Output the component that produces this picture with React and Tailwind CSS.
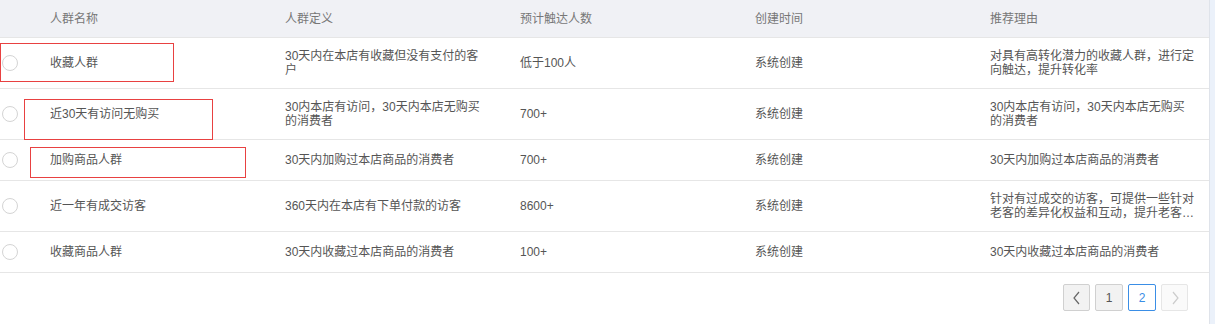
import React from "react";

const rows = [
  { name: "收藏人群", def: "30天内在本店有收藏但没有支付的客户", count: "低于100人", create: "系统创建", reason: "对具有高转化潜力的收藏人群，进行定向触达，提升转化率", h: "h-[51px]" },
  { name: "近30天有访问无购买", def: "30内本店有访问，30天内本店无购买的消费者", count: "700+", create: "系统创建", reason: "30内本店有访问，30天内本店无购买的消费者", h: "h-[51px]" },
  { name: "加购商品人群", def: "30天内加购过本店商品的消费者", count: "700+", create: "系统创建", reason: "30天内加购过本店商品的消费者", h: "h-[41px]" },
  { name: "近一年有成交访客", def: "360天内在本店有下单付款的访客", count: "8600+", create: "系统创建", reason: "针对有过成交的访客，可提供一些针对老客的差异化权益和互动，提升老客的复购率和忠诚度", h: "h-[51px]" },
  { name: "收藏商品人群", def: "30天内收藏过本店商品的消费者", count: "100+", create: "系统创建", reason: "30天内收藏过本店商品的消费者", h: "h-[41px]" },
];

const font = { fontFamily: '"Liberation Sans", "Noto Sans CJK SC", sans-serif' };

export default function App() {
  return (
    <div className="w-[1215px] h-[324px] flex bg-white overflow-hidden text-[12px]" style={font}>
      <div className="relative w-[1210px] border-r border-[#dfe3ea] flex flex-col">
        <div className="grid grid-cols-[285px_235px_235px_235px_220px] h-[38px] items-center bg-[#f0f1f5] border-b border-[#e6e6e6] text-[#777]">
          <div className="pl-[50px]">人群名称</div>
          <div>人群定义</div>
          <div>预计触达人数</div>
          <div>创建时间</div>
          <div>推荐理由</div>
        </div>
        {rows.map((r, i) => (
          <div key={i} className={`grid grid-cols-[285px_235px_235px_235px_220px] ${r.h} items-center border-b border-[#e6e6e6] text-[#555] leading-[14px]`}>
            <div className="flex items-center">
              <span className="ml-[2px] w-[16px] h-[16px] rounded-full border border-[#d4d4d4] bg-white shrink-0"></span>
              <span className="ml-[32px]">{r.name}</span>
            </div>
            <div className="w-[200px]">{r.def}</div>
            <div>{r.count}</div>
            <div>{r.create}</div>
            <div className="w-[205px] line-clamp-2">{r.reason}</div>
          </div>
        ))}
        <div className="flex justify-end gap-[5px] pt-[11px] pr-[21px]">
          <div className="w-[27px] h-[27px] flex items-center justify-center bg-[#f2f2f2] border border-[#d0d0d0] rounded-[2px]">
            <svg width="10" height="14" viewBox="0 0 10 14"><polyline points="7,1 2,7 7,13" fill="none" stroke="#666" strokeWidth="1.2" /></svg>
          </div>
          <div className="w-[28px] h-[27px] flex items-center justify-center bg-[#f2f2f2] border border-[#d0d0d0] rounded-[2px] text-[#555]">1</div>
          <div className="w-[28px] h-[27px] flex items-center justify-center bg-white border border-[#3a8ee6] rounded-[2px] text-[#3a8ee6]">2</div>
          <div className="w-[27px] h-[27px] flex items-center justify-center bg-[#fafafa] border border-[#e6e6e6] rounded-[2px]">
            <svg width="10" height="14" viewBox="0 0 10 14"><polyline points="3,1 8,7 3,13" fill="none" stroke="#ccc" strokeWidth="1.2" /></svg>
          </div>
        </div>
        <div className="absolute left-0 top-[43px] w-[174px] h-[39px] border border-[#e84141]"></div>
        <div className="absolute left-[24px] top-[99px] w-[189px] h-[41px] border border-[#e84141]"></div>
        <div className="absolute left-[30px] top-[147px] w-[216px] h-[31px] border border-[#e84141]"></div>
      </div>
      <div className="w-[5px] bg-[#ebf1fa]"></div>
    </div>
  );
}
